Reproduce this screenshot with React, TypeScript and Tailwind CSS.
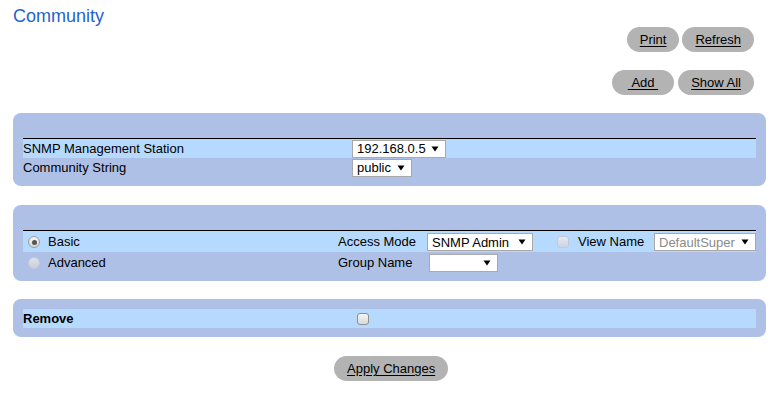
import clsx from 'clsx';

function PillButton({ children, className }: { children: React.ReactNode; className?: string }) {
  return (
    <button
      type="button"
      className={clsx(
        'h-[25px] rounded-full bg-[#b3b3b3] text-[13px] leading-none text-black underline underline-offset-[2px]',
        className ?? 'px-[13px]'
      )}
    >
      {children}
    </button>
  );
}

function Arrow() {
  return (
    <svg width="8" height="6" viewBox="0 0 8 6" className="shrink-0">
      <path d="M0.5 0.5h7L4 5.5z" fill="#000" />
    </svg>
  );
}

function FakeSelect({ value, className, muted }: { value?: string; className: string; muted?: boolean }) {
  return (
    <div
      className={clsx(
        'flex h-[18px] items-center justify-between border border-[#a9a9a9] bg-white pl-[4px] pr-[6px] text-[13px] leading-none',
        muted ? 'text-[#8a8a8a]' : 'text-black',
        className
      )}
    >
      <span>{value}</span>
      <Arrow />
    </div>
  );
}

function Radio({ checked, disabled }: { checked?: boolean; disabled?: boolean }) {
  return (
    <span
      className={clsx(
        'flex h-[12px] w-[12px] shrink-0 items-center justify-center rounded-full border',
        disabled
          ? 'border-[#c4cbdb] bg-gradient-to-b from-[#dfe3ec] to-[#c9cfdc]'
          : 'border-[#9c9c9c] bg-gradient-to-b from-[#f4f4f4] to-[#d6d6d6]'
      )}
    >
      {checked && <span className="h-[5px] w-[5px] rounded-full bg-[#555]" />}
    </span>
  );
}

function Check({ disabled }: { disabled?: boolean }) {
  return (
    <span
      className={clsx(
        'block h-[12px] w-[12px] shrink-0 rounded-[3px] border',
        disabled
          ? 'border-[#c0c8da] bg-gradient-to-b from-[#e4e8f0] to-[#cdd4e2]'
          : 'border-[#8f8f8f] bg-gradient-to-b from-[#f6f6f6] to-[#d9d9d9]'
      )}
    />
  );
}

export default function App() {
  return (
    <div className="h-[401px] w-[773px] overflow-hidden bg-white font-['Liberation_Sans',Arial,sans-serif] text-[13px] text-black">
      <h1 className="pl-[13px] pt-[6px] text-[18px] font-normal leading-[20px] text-[#1f63cf]">Community</h1>

      <div className="mt-[1px] flex justify-end gap-[3px] pr-[19px]">
        <PillButton>Print</PillButton>
        <PillButton>Refresh</PillButton>
      </div>
      <div className="mt-[18px] flex justify-end gap-[4px] pr-[19px]">
        <PillButton className="px-[16px]">&nbsp;Add&nbsp;</PillButton>
        <PillButton>Show All</PillButton>
      </div>

      {/* station / community */}
      <div className="ml-[13px] mt-[18px] w-[753px] rounded-[8px] bg-[#aec0e6] px-[10px] pb-[9px] pt-[25px]">
        <div className="border-t border-black">
          <div className="flex h-[19px] items-center bg-[#b6dafd]">
            <span className="w-[329px] leading-[19px]">SNMP Management Station</span>
            <FakeSelect value="192.168.0.5" className="w-[94px]" />
          </div>
          <div className="flex h-[19px] items-center">
            <span className="w-[329px] leading-[19px]">Community String</span>
            <FakeSelect value="public" className="w-[60px]" />
          </div>
        </div>
      </div>

      {/* access */}
      <div className="ml-[13px] mt-[19px] w-[753px] rounded-[8px] bg-[#aec0e6] px-[10px] pb-[8px] pt-[25px]">
        <div className="border-t border-black">
          <div className="flex h-[21px] items-center bg-[#b6dafd] pt-[1px]">
            <div className="flex w-[315px] items-center pl-[5px]">
              <Radio checked />
              <span className="ml-[8px]">Basic</span>
            </div>
            <span className="w-[89px]">Access Mode</span>
            <FakeSelect value="SNMP Admin" className="w-[106px]" />
            <span className="ml-[24px]">
              <Check disabled />
            </span>
            <span className="ml-[9px] w-[76px]">View Name</span>
            <FakeSelect value="DefaultSuper" className="w-[102px]" muted />
          </div>
          <div className="flex h-[21px] items-center pt-[1px]">
            <div className="flex w-[315px] items-center pl-[5px]">
              <Radio disabled />
              <span className="ml-[8px]">Advanced</span>
            </div>
            <span className="w-[91px]">Group Name</span>
            <FakeSelect className="w-[69px]" />
          </div>
        </div>
      </div>

      {/* remove */}
      <div className="ml-[13px] mt-[18px] w-[753px] rounded-[8px] bg-[#aec0e6] px-[10px] pb-[9px] pt-[10px]">
        <div className="flex h-[19px] items-center bg-[#b6dafd]">
          <span className="w-[334px] font-bold">Remove</span>
          <Check />
        </div>
      </div>

      <div className="ml-[334px] mt-[19px]">
        <PillButton>Apply Changes</PillButton>
      </div>
    </div>
  );
}
